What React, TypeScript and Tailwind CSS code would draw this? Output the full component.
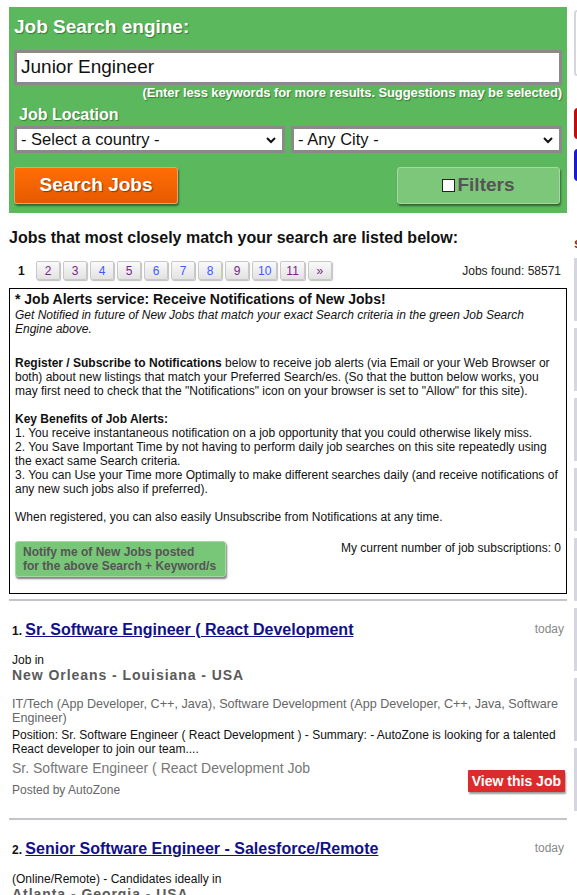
import React from "react";

const pages: { n: string; visited: boolean }[] = [
  { n: "2", visited: true },
  { n: "3", visited: true },
  { n: "4", visited: false },
  { n: "5", visited: true },
  { n: "6", visited: false },
  { n: "7", visited: false },
  { n: "8", visited: false },
  { n: "9", visited: true },
  { n: "10", visited: false },
  { n: "11", visited: true },
  { n: "»", visited: true },
];

function Chevron() {
  return (
    <svg width="12" height="8" viewBox="0 0 12 8" className="shrink-0">
      <path d="M2 2 L6 6 L10 2" stroke="#111" strokeWidth="2" fill="none" />
    </svg>
  );
}

function SearchBox() {
  return (
    <div className="bg-[#5cb85c] px-[5px] pt-[9px] pb-[9px]">
      <h1 className="text-[19px] font-bold text-white leading-[22px] [text-shadow:1px_1px_1px_#3a7a3a]">
        Job Search engine:
      </h1>
      <div className="mt-[12px] h-[35px] border-[3px] border-[#8a8a8a] bg-white flex items-center px-[4px] text-[19px] text-[#111]">
        Junior Engineer
      </div>
      <p className="text-right text-[13px] font-bold text-white leading-[15px] mt-[0px] tracking-[-0.1px] [text-shadow:1px_1px_1px_#3a7a3a]">
        (Enter less keywords for more results. Suggestions may be selected)
      </p>
      <p className="text-[16px] font-bold text-white leading-[19px] mt-[5px] pl-[5px] [text-shadow:1px_1px_1px_#3a7a3a]">
        Job Location
      </p>
      <div className="flex gap-[6px] mt-[2px]">
        <div className="flex-1 h-[27px] border-[3px] border-[#8a8a8a] bg-white flex items-center justify-between pl-[4px] pr-[5px] text-[16.5px] text-[#111]">
          <span>- Select a country -</span>
          <Chevron />
        </div>
        <div className="flex-1 h-[27px] border-[3px] border-[#8a8a8a] bg-white flex items-center justify-between pl-[4px] pr-[5px] text-[16.5px] text-[#111]">
          <span>- Any City -</span>
          <Chevron />
        </div>
      </div>
      <div className="flex justify-between mt-[14px] pr-[2px]">
        <button className="w-[164px] h-[37px] rounded-[3px] border border-[#f2a06a] bg-gradient-to-b from-[#ff6d05] to-[#e65a00] text-white text-[19px] font-bold shadow-[1px_2px_2px_rgba(0,0,0,0.45)] [text-shadow:1px_1px_1px_#8a3a00]">
          Search Jobs
        </button>
        <button className="w-[163px] h-[37px] rounded-[3px] border border-[#a6d8a4] bg-[#7cc77a] text-[#555] text-[19px] font-bold shadow-[1px_2px_2px_rgba(0,0,0,0.45)] flex items-center justify-center gap-[2px]">
          <span className="inline-block w-[13px] h-[13px] bg-white border border-[#222]" />
          Filters
        </button>
      </div>
    </div>
  );
}

function Pager() {
  return (
    <div className="flex items-center mt-[14px] text-[12px]">
      <span className="font-bold text-[#111] w-[27px] pl-[9px]">1</span>
      <div className="flex gap-[3px]">
        {pages.map((p) => (
          <span
            key={p.n}
            className={
              "h-[19px] min-w-[24px] px-[5px] flex items-center justify-center rounded-[2px] border border-[#c8c8c8] bg-gradient-to-b from-[#fafafa] to-[#e2e2e2] shadow-[1px_1px_1px_rgba(0,0,0,0.25)] " +
              (p.visited ? "text-[#7a1f8a]" : "text-[#3b5bff]")
            }
          >
            {p.n}
          </span>
        ))}
      </div>
      <span className="ml-auto text-[#222] pr-[6px]">Jobs found: 58571</span>
    </div>
  );
}

function AlertBox() {
  return (
    <div className="mt-[8px] border border-black px-[5px] pt-[2px] pb-[16px] text-[12px] leading-[14px] text-[#111]">
      <p className="text-[14px] font-bold leading-[17px]">* Job Alerts service: Receive Notifications of New Jobs!</p>
      <p className="italic">
        Get Notified in future of New Jobs that match your exact Search criteria in the green Job Search Engine above.
      </p>
      <p className="mt-[20px]">
        <b>Register / Subscribe to Notifications</b> below to receive job alerts (via Email or your Web Browser or
        both) about new listings that match your Preferred Search/es. (So that the button below works, you may
        first need to check that the "Notifications" icon on your browser is set to "Allow" for this site).
      </p>
      <p className="mt-[14px] font-bold">Key Benefits of Job Alerts:</p>
      <p>1. You receive instantaneous notification on a job opportunity that you could otherwise likely miss.</p>
      <p>
        2. You Save Important Time by not having to perform daily job searches on this site repeatedly using the
        exact same Search criteria.
      </p>
      <p>
        3. You can Use your Time more Optimally to make different searches daily (and receive notifications of
        any new such jobs also if preferred).
      </p>
      <p className="mt-[14px]">When registered, you can also easily Unsubscribe from Notifications at any time.</p>
      <div className="flex justify-between items-start mt-[17px]">
        <button className="w-[211px] h-[36px] rounded-[3px] bg-[#78c677] border border-[#a6d8a4] text-left pl-[7px] text-[12px] leading-[14px] font-bold text-[#555] shadow-[1px_2px_2px_rgba(0,0,0,0.5)]">
          Notify me of New Jobs posted
          <br />
          for the above Search + Keyword/s
        </button>
        <span>My current number of job subscriptions: 0</span>
      </div>
    </div>
  );
}

function JobItem(props: {
  n: number;
  title: string;
  pre: string;
  place: string;
  cats?: string;
  summary?: string;
  sub?: string;
  company?: string;
}) {
  return (
    <div className="border-t-2 border-[#c4c4cc] pt-[19px] pb-[21px] pl-[3px] pr-[2px]">
      <div className="flex justify-between items-start">
        <p className="text-[16px] font-bold leading-[19px]">
          <span className="text-[12px] text-[#111]">{props.n}. </span>
          <a href="#" className="text-[#10108a] underline">
            {props.title}
          </a>
        </p>
        <span className="text-[12px] text-[#888] pr-[1px]">today</span>
      </div>
      <p className="mt-[12px] text-[12px] leading-[14px] text-[#111]">{props.pre}</p>
      <p className="text-[14px] font-bold leading-[16px] tracking-[0.95px] text-[#5a5a5a]">{props.place}</p>
      {props.cats && (
        <>
          <p className="mt-[14px] text-[12.6px] leading-[14px] text-[#666]">{props.cats}</p>
          <p className="mt-[3px] text-[12px] leading-[14px] text-[#111]">{props.summary}</p>
          <div className="flex justify-between items-start mt-[4px]">
            <div>
              <p className="text-[14px] leading-[16px] text-[#777]">{props.sub}</p>
              <p className="mt-[7px] text-[12px] leading-[14px] text-[#666]">Posted by {props.company}</p>
            </div>
            <button className="mt-[10px] h-[22px] px-[4px] bg-[#dd2b2b] text-white text-[14px] font-bold rounded-[1px] shadow-[1px_2px_2px_rgba(0,0,0,0.4)]">
              View this Job
            </button>
          </div>
        </>
      )}
    </div>
  );
}

function Sidebar() {
  return (
    <div className="w-[120px] shrink-0 pt-[3px] flex flex-col">
      <div className="h-[66px] border-2 border-[#d6d6de] rounded-[3px]" />
      <div className="mt-[32px] h-[31px] bg-[#c40a0a] rounded-[4px]" />
      <div className="mt-[10px] h-[32px] bg-[#1a1ad6] rounded-[4px]" />
      <p className="mt-[54px] text-[14px] font-bold text-[#8a2a1a] leading-[16px]">s</p>
      <div className="mt-[7px] flex flex-col gap-[7px]">
        {[0, 1, 2, 3, 4, 5, 6, 7].map((i) => (
          <div key={i} className="h-[63px] border-l-[3px] border-t border-b border-[#d6d6e2]" />
        ))}
      </div>
    </div>
  );
}

export default function App() {
  return (
    <div className="w-[577px] h-[895px] overflow-hidden bg-white font-['Liberation_Sans',Arial,sans-serif]">
      <div className="flex gap-[7px] w-[700px] pt-[7px] pl-[9px]">
        <main className="w-[558px] shrink-0">
          <SearchBox />
          <h2 className="mt-[15px] text-[16px] font-bold text-[#111] leading-[19px]">
            Jobs that most closely match your search are listed below:
          </h2>
          <Pager />
          <AlertBox />
          <div className="mt-[5px]">
            <JobItem
              n={1}
              title="Sr. Software Engineer ( React Development"
              pre="Job in"
              place="New Orleans - Louisiana - USA"
              cats="IT/Tech (App Developer, C++, Java), Software Development (App Developer, C++, Java, Software Engineer)"
              summary="Position: Sr. Software Engineer ( React Development ) - Summary: - AutoZone is looking for a talented React developer to join our team...."
              sub="Sr. Software Engineer ( React Development Job"
              company="AutoZone"
            />
            <JobItem
              n={2}
              title="Senior Software Engineer - Salesforce/Remote"
              pre="(Online/Remote) - Candidates ideally in"
              place="Atlanta - Georgia - USA"
            />
          </div>
        </main>
        <Sidebar />
      </div>
    </div>
  );
}
